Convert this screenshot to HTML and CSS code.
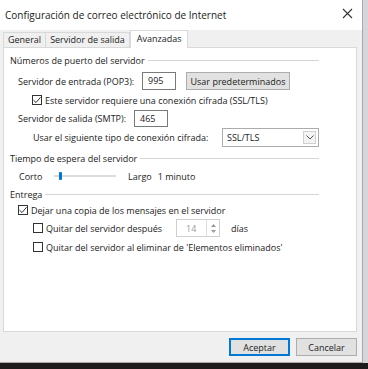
FILE: index.html
```html
<!DOCTYPE html>
<html lang="es">
<head>
  <meta charset="UTF-8">
  <title>Configuración de correo electrónico de Internet</title>
  <link rel="stylesheet" href="styles.css">
</head>
<body>
  <div class="dialogo">
    <div class="titulo">
      <span>Configuración de correo electrónico de Internet</span>
      <svg class="cerrar" width="11" height="11" viewBox="0 0 11 11"><path d="M1 1L10 10M10 1L1 10" stroke="#333" stroke-width="1.1"/></svg>
    </div>

    <div class="pestanas">
      <div class="pestana">General</div>
      <div class="pestana">Servidor de salida</div>
      <div class="pestana activa">Avanzadas</div>
    </div>

    <div class="panel">
      <div class="grupo g1"><span>Números de puerto del servidor</span></div>

      <div class="fila f-pop">
        <label class="lbl-pop">Servidor de entrada (POP3):</label>
        <div class="caja pop">995</div>
        <button class="boton predet">Usar predeterminados</button>
      </div>

      <div class="fila f-ssl">
        <span class="check marcado"><svg width="10" height="10" viewBox="0 0 10 10"><path d="M1.5 5.2L4 7.6L8.6 2.2" fill="none" stroke="#333" stroke-width="1"/></svg></span>
        <span>Este servidor requiere una conexión cifrada (SSL/TLS)</span>
      </div>

      <div class="fila f-smtp">
        <label class="lbl-smtp">Servidor de salida (SMTP):</label>
        <div class="caja smtp">465</div>
      </div>

      <div class="fila f-cifrado">
        <label class="lbl-cifrado">Usar el siguiente tipo de conexión cifrada:</label>
        <div class="selector">
          <span>SSL/TLS</span>
          <span class="flecha"><svg width="8" height="5" viewBox="0 0 8 5"><path d="M0.5 0.5L4 4L7.5 0.5" fill="none" stroke="#555" stroke-width="1"/></svg></span>
        </div>
      </div>

      <div class="grupo g2"><span>Tiempo de espera del servidor</span></div>

      <div class="fila f-tiempo">
        <span class="lbl-corto">Corto</span>
        <div class="barra"><div class="pulgar"></div></div>
        <span class="lbl-largo">Largo</span>
        <span>1 minuto</span>
      </div>

      <div class="grupo g3"><span>Entrega</span></div>

      <div class="fila f-copia">
        <span class="check marcado"><svg width="10" height="10" viewBox="0 0 10 10"><path d="M1.5 5.2L4 7.6L8.6 2.2" fill="none" stroke="#333" stroke-width="1"/></svg></span>
        <span>Dejar una copia de los mensajes en el servidor</span>
      </div>

      <div class="fila f-despues">
        <span class="check"></span>
        <span class="lbl-despues">Quitar del servidor después</span>
        <div class="giro">
          <span>14</span>
          <span class="flechas">
            <svg width="5" height="3" viewBox="0 0 5 3"><path d="M0 3L2.5 0L5 3Z" fill="#999"/></svg>
            <svg width="5" height="3" viewBox="0 0 5 3"><path d="M0 0L2.5 3L5 0Z" fill="#999"/></svg>
          </span>
        </div>
        <span>días</span>
      </div>

      <div class="fila f-eliminar">
        <span class="check"></span>
        <span>Quitar del servidor al eliminar de 'Elementos eliminados'</span>
      </div>
    </div>

    <div class="botones">
      <button class="boton aceptar">Aceptar</button>
      <button class="boton">Cancelar</button>
    </div>
  </div>
  <div class="fondo"></div>
</body>
</html>
```

FILE: styles.css
```css
body {
  margin: 0;
  background-color: #d4d6da;
  font-family: "Open Sans", "Noto Sans", sans-serif;
  font-size: 9px;
  color: #222;
  width: 368px;
  height: 369px;
  overflow: hidden;
}
.dialogo {
  width: 362px;
  height: 362px;
  background-color: #f0f0f0;
  border-right: 1px solid #a9a9a9;
  border-bottom: 1px solid #a9a9a9;
  display: flex;
  flex-direction: column;
}
.fondo {
  height: 6px;
  background-color: #1c1c1c;
}
.titulo {
  height: 30px;
  background-color: #fff;
  display: flex;
  align-items: center;
  justify-content: space-between;
  padding: 0 9px 0 5px;
  font-size: 10px;
  color: #1a1a1a;
}
.cerrar {
  margin-top: -3px;
}
.pestanas {
  display: flex;
  padding: 2px 0 0 3px;
  height: 15px;
  align-items: flex-end;
}
.pestana {
  height: 14px;
  line-height: 14px;
  padding: 0 4px;
  border: 1px solid #d9d9d9;
  border-bottom: none;
  background-color: #f0f0f0;
  margin-right: -1px;
}
.activa {
  background-color: #fff;
  height: 17px;
  line-height: 15px;
  margin-left: 1px;
  padding: 0 6px;
  position: relative;
  top: 1px;
}
.panel {
  width: 354px;
  height: 285px;
  box-sizing: border-box;
  margin-left: 3px;
  background-color: #fff;
  border: 1px solid #d9d9d9;
  padding-top: 4px;
}
.grupo {
  display: flex;
  align-items: center;
  height: 16px;
  margin-left: 6px;
  width: 309px;
}
.grupo::after {
  content: "";
  flex: 1;
  height: 1px;
  background-color: #d5d5d5;
  margin-left: 3px;
}
.g2 {
  margin-top: 3px;
}
.g3 {
  margin-top: 1px;
}
.fila {
  display: flex;
  align-items: center;
  height: 18px;
}
.f-pop {
  height: 20px;
  margin-top: 3px;
  padding-left: 14px;
}
.lbl-pop {
  width: 124px;
}
.caja {
  height: 16px;
  line-height: 16px;
  border: 1px solid #7a7a7a;
  padding-left: 5px;
  background-color: #fff;
  box-sizing: border-box;
}
.pop {
  width: 34px;
  height: 18px;
  line-height: 16px;
}
.smtp {
  width: 34px;
  height: 17px;
  line-height: 15px;
}
.boton {
  font-family: inherit;
  font-size: 9px;
  color: #222;
  background-color: #e1e1e1;
  border: 1px solid #adadad;
  padding: 0;
  height: 18px;
}
.predet {
  width: 104px;
  margin-left: 10px;
}
.f-ssl {
  padding-left: 28px;
}
.check {
  width: 10px;
  height: 10px;
  border: 1px solid #333;
  box-sizing: border-box;
  margin-right: 3px;
  display: flex;
  align-items: center;
  justify-content: center;
  background-color: #fff;
}
.check svg {
  flex-shrink: 0;
}
.f-smtp {
  padding-left: 14px;
}
.lbl-smtp {
  width: 116px;
}
.f-cifrado {
  height: 19px;
  margin-top: 1px;
  padding-left: 29px;
}
.lbl-cifrado {
  width: 189px;
}
.selector {
  width: 97px;
  height: 19px;
  border: 1px solid #acacac;
  box-sizing: border-box;
  display: flex;
  align-items: center;
  justify-content: space-between;
  padding-left: 4px;
  padding-right: 2px;
}
.flecha {
  width: 13px;
  height: 13px;
  border: 1px solid #d0d0d0;
  background-color: #f3f3f3;
  box-sizing: border-box;
  display: flex;
  align-items: center;
  justify-content: center;
}
.f-tiempo {
  margin-top: 1px;
  padding-left: 15px;
}
.lbl-corto {
  width: 35px;
}
.barra {
  width: 62px;
  height: 2px;
  background-color: #dcdcdc;
  position: relative;
  margin-right: 12px;
}
.pulgar {
  position: absolute;
  left: 5px;
  top: -3px;
  width: 3px;
  height: 8px;
  background-color: #0078d7;
  border-radius: 1px;
}
.lbl-largo {
  margin-right: 6px;
}
.f-copia {
  height: 16px;
  padding-left: 14px;
}
.f-despues {
  margin-top: 1px;
  padding-left: 29px;
}
.lbl-despues {
  width: 130px;
}
.giro {
  width: 44px;
  height: 18px;
  border: 1px solid #cfcfcf;
  box-sizing: border-box;
  display: flex;
  align-items: center;
  justify-content: space-between;
  color: #9a9a9a;
  padding-left: 9px;
  margin-right: 11px;
}
.flechas {
  width: 12px;
  height: 16px;
  border-left: 1px solid #dcdcdc;
  display: flex;
  flex-direction: column;
  align-items: center;
  justify-content: center;
  gap: 3px;
}
.f-eliminar {
  margin-top: 1px;
  padding-left: 29px;
}
.botones {
  display: flex;
  justify-content: flex-end;
  gap: 6px;
  padding: 6px 5px 0 0;
}
.botones .boton {
  width: 61px;
}
.aceptar {
  border-color: #0078d7;
  box-shadow: inset 0 0 0 1px #0078d7;
}
```
